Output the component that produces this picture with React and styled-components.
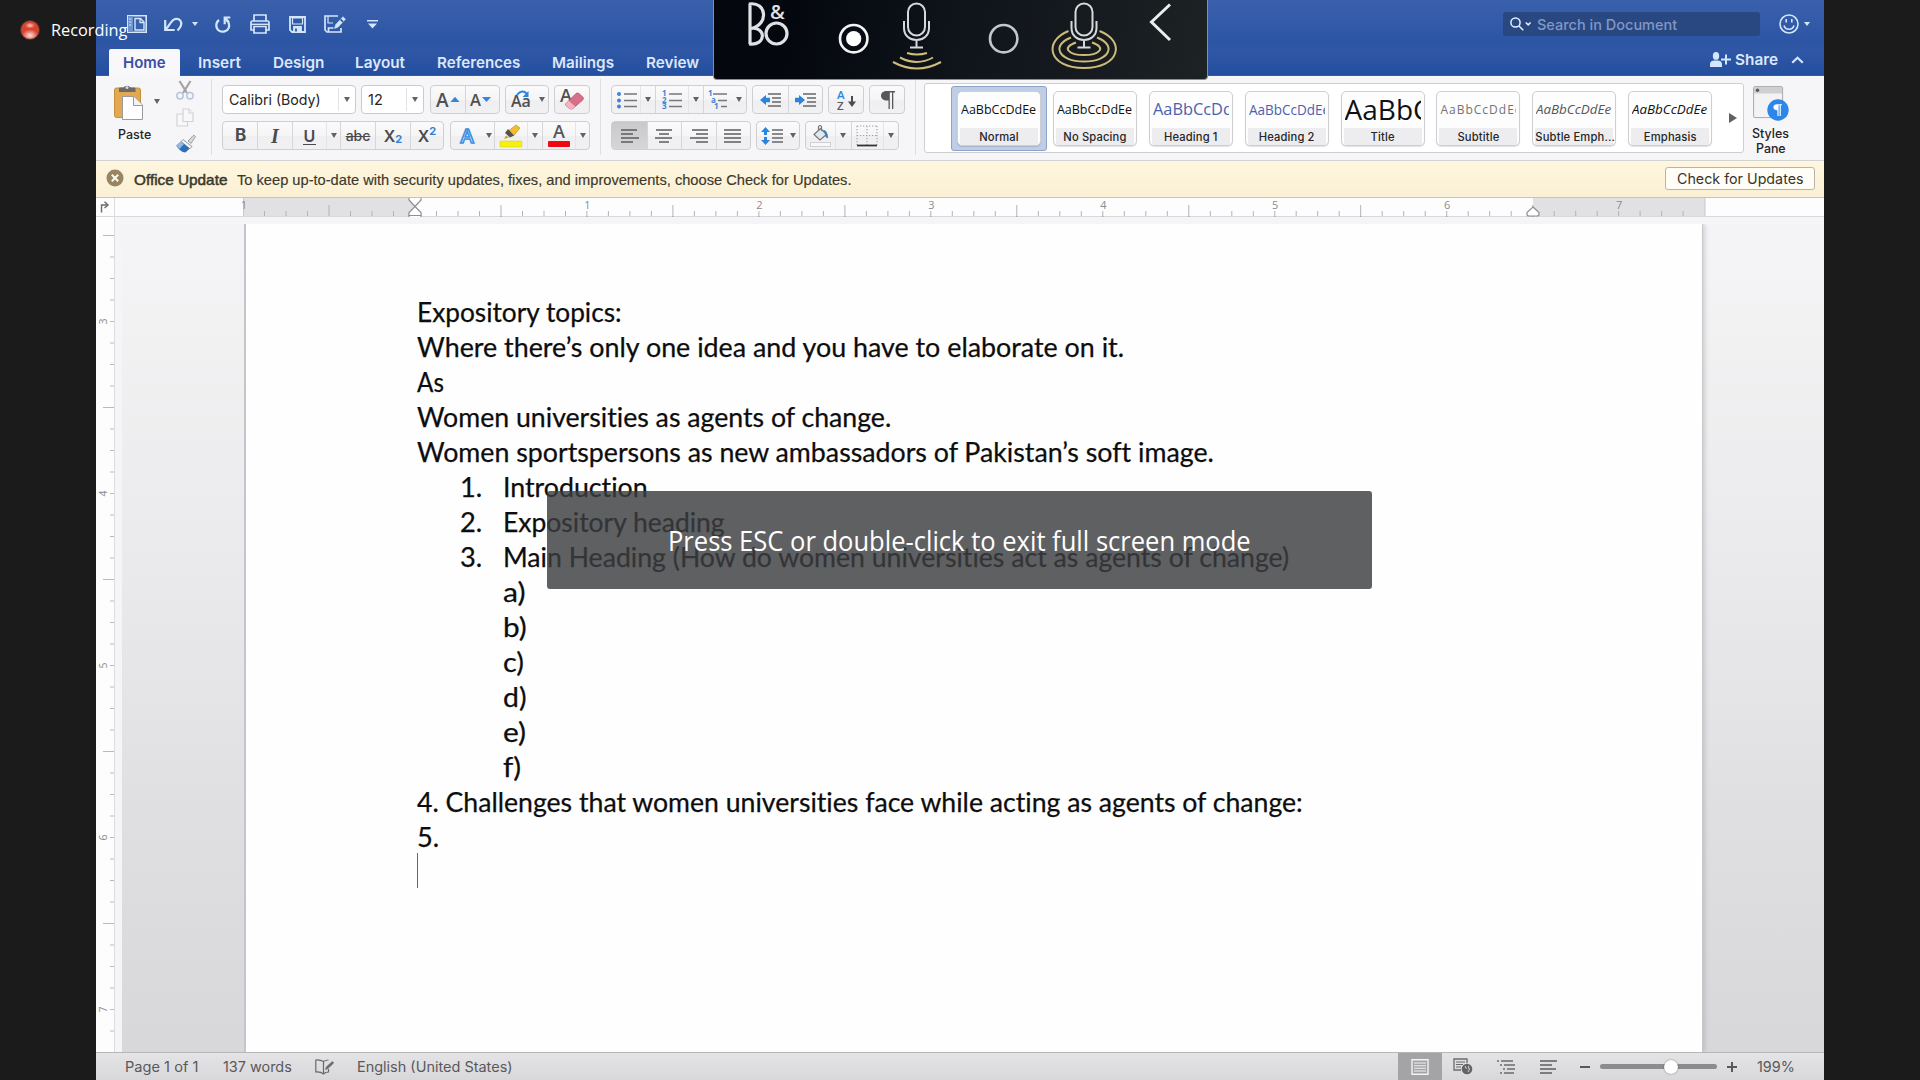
import React, { useLayoutEffect, useRef, useState } from "react";
import styled, { createGlobalStyle, css } from "styled-components";

const UI = `Inter, Roboto, "Liberation Sans", sans-serif`;
const DOC = `Lato, "Open Sans", sans-serif`;
const SEGOE = `"Open Sans", "Noto Sans", sans-serif`;

const GlobalStyle = createGlobalStyle`
  *, *::before, *::after { box-sizing: border-box; }
  body { margin: 0; background: #1b1b1b; font-family: ${UI}; }
  svg { display: block; flex: none; overflow: visible; }
`;

/* ---------- text that fills a given measure ---------- */

const FitBox = styled.span`
  display: inline-block;
  flex: none;
  width: ${(p) => p.$w}px;
  white-space: pre;
`;
const FitInner = styled.span`
  display: inline-block;
  transform-origin: 0 50%;
`;

function Fit({ w, children }) {
  const ref = useRef(null);
  const [scale, setScale] = useState(1);
  useLayoutEffect(() => {
    const natural = ref.current.offsetWidth;
    if (natural) setScale(w / natural);
  }, [w, children]);
  return (
    <FitBox $w={w}>
      <FitInner ref={ref} style={{ transform: `scaleX(${scale})` }}>{children}</FitInner>
    </FitBox>
  );
}

/* ---------- shell ---------- */

const Screen = styled.div`
  position: relative;
  width: 1920px;
  height: 1080px;
  padding: 0 96px;
  overflow: hidden;
  background: #1b1b1b;
`;
const Window = styled.div`
  display: flex;
  flex-direction: column;
  width: 1728px;
  height: 1080px;
  background: #f6f5f8;
`;

const Header = styled.header`
  height: 76px;
  flex: none;
  background: linear-gradient(#3a60ab 0, #345ca8 18px, #2c55a4 40px, #2f57a6 50px, #244f9f 74px);
  border-bottom: 1px solid #3b5c97;
`;
const QuickBar = styled.div`
  display: flex;
  align-items: center;
  height: 48px;
  padding-left: 31px;
`;
const Slot = styled.span`
  display: flex;
  align-items: center;
  justify-content: center;
  flex: none;
  width: ${(p) => p.$w}px;
  margin-left: ${(p) => p.$ml || 0}px;
`;
const Caret = styled.i`
  flex: none;
  width: 0;
  height: 0;
  border: ${(p) => p.$s || 3.5}px solid transparent;
  border-bottom: 0;
  border-top: ${(p) => (p.$s || 3.5) * 1.6}px solid ${(p) => p.$c || "#626262"};
`;
const SearchBox = styled.div`
  display: flex;
  align-items: center;
  width: 257px;
  height: 24px;
  margin-left: auto;
  padding-left: 7px;
  gap: 5px;
  border-radius: 3px;
  background: #294781;
  color: #8197c6;
  font-size: 14.5px;
  font-weight: 500;
`;
const Feedback = styled.div`
  display: flex;
  align-items: center;
  gap: 5px;
  margin: 0 14px 0 19px;
`;

const TabRow = styled.nav`
  display: flex;
  align-items: flex-end;
  height: 28px;
  padding-left: 13px;
`;
const Tab = styled.span`
  display: flex;
  align-items: center;
  flex: none;
  height: 27px;
  margin-right: ${(p) => p.$mr}px;
  padding: ${(p) => (p.$active ? "0 14px 1px" : "0 0 1px")};
  border-radius: 2px 2px 0 0;
  background: ${(p) => (p.$active ? "#f8f8fb" : "transparent")};
  color: ${(p) => (p.$active ? "#3a4ea6" : "#dde7fa")};
  font-size: 15px;
  font-weight: 600;
`;
const ShareArea = styled.span`
  display: flex;
  align-items: center;
  height: 33px;
  margin-left: auto;
  margin-right: 20px;
  color: #dbe8ff;
  font-size: 15px;
  font-weight: 600;
`;

/* ---------- ribbon ---------- */

const Ribbon = styled.div`
  display: flex;
  flex: none;
  height: 85px;
  border-bottom: 1px solid #d3d2d2;
  background: #f6f5f8;
`;
const Clipboard = styled.div`
  display: flex;
  width: 115px;
  padding: 5px 0 0 18px;
`;
const PasteCol = styled.div`
  display: flex;
  flex-direction: column;
  align-items: flex-start;
  width: 52px;
  padding-top: 2px;
  font-size: 12.5px;
  font-weight: 500;
  color: #262626;
`;
const PasteTop = styled.div`
  display: flex;
  align-items: center;
  gap: 11px;
  height: 37px;
`;
const PasteLabel = styled.div`
  padding: 7px 0 0 4px;
`;
const ToolCol = styled.div`
  display: flex;
  flex-direction: column;
  gap: 8px;
  padding-left: 10px;
`;
const Divider = styled.div`
  flex: none;
  width: 1px;
  height: 76px;
  margin: 3px ${(p) => p.$mr || 10}px 0 0;
  background: #dfdee2;
`;
const GroupCol = styled.div`
  display: flex;
  flex-direction: column;
  flex: none;
  gap: 7px;
  width: ${(p) => p.$w}px;
  padding-top: 9px;
`;
const Line = styled.div`
  display: flex;
  gap: 5px;
  height: 29px;
`;
const Cluster = styled.div`
  display: flex;
  flex: none;
  width: ${(p) => p.$w}px;
  margin-left: ${(p) => p.$ml || 0}px;
  border: 1px solid #cfced1;
  border-radius: 4px;
  background: linear-gradient(#fafafb, #f5f5f6 50%, #efeff1 52%, #f1f1f3);
`;
const Cell = styled.div`
  display: flex;
  align-items: center;
  justify-content: center;
  flex: 1 1 ${(p) => p.$w}px;
  min-width: 0;
  border-left: 1px solid ${(p) => (p.$sep ? "#d6d5d8" : p.$faint ? "#e4e4e6" : "transparent")};
  ${(p) => p.$active && css`background: linear-gradient(#c9c9cb, #d6d6d8);`}
  color: #4b4b4d;
  font-size: ${(p) => p.$fs || 17}px;
  font-weight: ${(p) => p.$fw || 600};
  line-height: 1;
`;
const Field = styled.div`
  display: flex;
  align-items: center;
  flex: none;
  width: ${(p) => p.$w}px;
  margin-right: ${(p) => p.$mr || 0}px;
  padding-left: 6px;
  border: 1px solid #cbcacd;
  border-radius: 4px;
  background: #fff;
  color: #242424;
  font-size: 14.5px;
`;
const FieldArrow = styled.span`
  display: flex;
  align-items: center;
  justify-content: center;
  width: 17px;
  height: 23px;
  margin-left: auto;
  border-left: 1px solid #e3e3e5;
`;
const Struck = styled.span`
  text-decoration: line-through;
  font-size: 14px;
  font-weight: 500;
`;
const Serif = styled.em`
  font-family: "Liberation Serif", serif;
  font-size: 20px;
  font-weight: 700;
`;
const Under = styled.span`
  border-bottom: 1.5px solid #4b4b4d;
  padding: 1px 1px 0;
`;
const Script = styled.span`
  color: #2f80d3;
  font-size: 11px;
  font-weight: 700;
  transform: translateY(${(p) => p.$dy}px);
`;

const Gallery = styled.div`
  display: flex;
  flex: none;
  align-items: center;
  width: 820px;
  height: 70px;
  margin-top: 7px;
  padding-left: 26px;
  border: 1px solid #cfced1;
  border-radius: 3px;
  background: #fff;
`;
const StyleWrap = styled.div`
  flex: none;
  width: 95.9px;
  height: 65px;
  padding: 4px 5px;
  border: 1px solid ${(p) => (p.$on ? "#8ea3c8" : "transparent")};
  border-radius: 3px;
  background: ${(p) => (p.$on ? "#bfcde5" : "transparent")};
`;
const StyleCard = styled.div`
  display: flex;
  flex-direction: column;
  width: 84px;
  height: 55px;
  border: 1px solid #cfced2;
  border-radius: 5px;
  background: #fdfdfe;
  box-shadow: 0 1px 1px rgba(0, 0, 0, 0.12);
  overflow: hidden;
`;
const Preview = styled.div`
  display: flex;
  align-items: center;
  flex: 1;
  margin: 0 3px;
  padding-bottom: 1px;
  overflow: hidden;
  white-space: nowrap;
  font-family: ${(p) => p.$ff || `"Open Sans", sans-serif`};
  color: ${(p) => p.$c};
  font-size: ${(p) => p.$fs}px;
  font-weight: ${(p) => p.$fw || 400};
  font-style: ${(p) => (p.$it ? "italic" : "normal")};
  letter-spacing: ${(p) => p.$ls || 0}px;
`;
const StyleLabel = styled.div`
  height: 17px;
  margin: 0 2px;
  background: #ededf0;
  color: #262626;
  font-size: 11.2px;
  font-weight: 500;
  letter-spacing: 0.15px;
  line-height: 18px;
  text-align: center;
  white-space: nowrap;
`;
const GalleryNext = styled.i`
  margin-left: 11px;
  border: 5.5px solid transparent;
  border-right: 0;
  border-left: 8px solid #606062;
`;
const PaneButton = styled.div`
  display: flex;
  flex-direction: column;
  align-items: center;
  width: 53px;
  padding-top: 10px;
  color: #242424;
  font-size: 12.8px;
  font-weight: 500;
  line-height: 14.5px;
  text-align: center;
`;
const PaneText = styled.div`
  margin-top: 6px;
`;

/* ---------- update bar ---------- */

const UpdateBar = styled.div`
  display: flex;
  align-items: center;
  flex: none;
  height: 37px;
  padding: 0 9px 0 10px;
  border-bottom: 1px solid #cbc4ac;
  background: linear-gradient(#fef6de, #faf0d5);
  color: #3d382c;
  font-family: "Liberation Sans", Arial, sans-serif;
  font-size: 14.5px;
`;
const BadgeSlot = styled.span`
  padding-bottom: 2px;
`;
const Strong = styled.span`
  margin: 1px 10px 0 10px;
  -webkit-text-stroke: 0.5px #3d382c;
`;
const Message = styled.span`
  padding-top: 1px;
  -webkit-text-stroke: 0.15px #3d382c;
`;
const UpdateButton = styled.div`
  display: flex;
  align-items: center;
  justify-content: center;
  width: 150px;
  height: 23px;
  margin: 0 0 1px auto;
  border: 1px solid #b9b4a6;
  border-radius: 3px;
  background: #fffdf6;
  color: #38352f;
  font-family: ${UI};
  font-size: 14.5px;
`;

/* ---------- document ---------- */

const RulerRow = styled.div`
  display: flex;
  flex: none;
  height: 19px;
  border-bottom: 1px solid #d9d8db;
  background: #fdfdfe;
`;
const TabStop = styled.div`
  width: 19px;
  border-right: 1px solid #dcdbde;
  padding: 3px 0 0 4px;
`;
const Workspace = styled.div`
  display: flex;
  flex: 1;
  min-height: 0;
  background: linear-gradient(#f5f5f8 0, #f1f1f2 15%, #e9e8eb 45%, #dedee0 75%, #d8d7da 100%);
`;
const SideRuler = styled.div`
  flex: none;
  width: 19px;
  background: #fdfdfe;
  border-right: 1px solid #dcdbde;
`;
const Gutter = styled.div`
  flex: none;
  width: 7px;
  background: #f5f5f8;
`;
const Desk = styled.div`
  flex: 1;
  padding: 7px 0 0 124px;
`;
const Page = styled.article`
  width: 1456px;
  height: 100%;
  padding: 70px 0 0 170.5px;
  background: #fefefe;
  box-shadow: -1px 0 0 1px #c6c4c9, 1px 0 0 #c9c8cb, 3px 0 4px rgba(120, 118, 125, 0.28);
  clip-path: inset(0 -8px 0 -6px);
  color: #0d0d0d;
  font-family: ${DOC};
  font-size: 26px;
  font-variant-ligatures: none;
  -webkit-text-stroke: 0.25px #0d0d0d;
`;
const Para = styled.div`
  display: flex;
  height: 35.03px;
  line-height: 36px;
  padding-left: ${(p) => p.$in || 0}px;
`;
const Num = styled.span`
  flex: none;
  width: 43px;
`;
const Insertion = styled.div`
  width: 1.5px;
  height: 35px;
  margin-top: -1px;
  background: #666;
`;

/* ---------- status bar ---------- */

const StatusBar = styled.footer`
  display: flex;
  align-items: center;
  flex: none;
  height: 28px;
  padding-left: 29px;
  border-top: 1px solid #b7b6b9;
  background: linear-gradient(#e4e3e5, #d8d7d9);
  color: #58585b;
  font-size: 14px;
`;
const ViewButton = styled.div`
  display: flex;
  align-items: center;
  justify-content: center;
  width: ${(p) => p.$w || 44}px;
  height: 100%;
  background: ${(p) => (p.$on ? "#a4a4a6" : "transparent")};
`;
const Track = styled.div`
  display: flex;
  align-items: center;
  width: 117px;
  height: 5px;
  margin: 0 10px;
  padding-left: 64px;
  border-radius: 3px;
  background: #8c8c8e;
`;
const Knob = styled.i`
  width: 14px;
  height: 14px;
  border-radius: 50%;
  background: #fff;
  box-shadow: 0 0 1.5px rgba(0, 0, 0, 0.55);
`;

/* ---------- overlays ---------- */

const RecordingTag = styled.div`
  position: absolute;
  left: 20px;
  top: 18px;
  display: flex;
  align-items: center;
  gap: 11px;
  height: 24px;
  color: #fff;
  font-family: ${SEGOE};
  font-size: 16.5px;
`;
const RecordLabel = styled.span`
  padding-bottom: 2px;
`;
const RecordDot = styled.i`
  width: 20px;
  height: 20px;
  border: 1.5px solid #44312f;
  border-radius: 50%;
  background: radial-gradient(ellipse 5px 3px at 50% 25%, #f8c8c2, transparent),
    radial-gradient(ellipse 8px 6px at 50% 80%, #ffe2de, transparent), #d8432f;
`;
const AudioPanel = styled.div`
  position: absolute;
  left: 713px;
  top: 0;
  width: 495px;
  height: 80px;
  border: 1px solid #8b8e94;
  border-top: 0;
  border-radius: 0 0 4px 4px;
  background: linear-gradient(100deg, #04070e 15%, #11151c 55%, #1d2224);
`;
const Toast = styled.div`
  position: absolute;
  left: 547px;
  top: 491px;
  display: flex;
  align-items: center;
  justify-content: center;
  width: 825px;
  height: 98px;
  padding-top: 2px;
  border-radius: 3px;
  background: rgba(60, 61, 63, 0.82);
  color: #fff;
  font-family: ${SEGOE};
  font-size: 26.5px;
`;

/* ---------- icons ---------- */

const TINT = "#d3e6fb";

const PaneToggle = () => (
  <svg width="20" height="18" viewBox="0 0 20 18" fill="none" stroke={TINT} strokeWidth="1.6">
    <path d="M.8 .8h18.4v16.4H.8z" />
    <path d="M1 1h5v16H1z" fill="#6f93cf" stroke="none" />
    <path d="M2 4h2.4M2 7h2.4M2 10h2.4" strokeWidth="1" />
    <path d="M8 3.5h5.5l3.5 3.6V15H8z" fill="#3a61ac" strokeWidth="1.4" />
    <path d="M13 3.5v4h4" strokeWidth="1.3" />
  </svg>
);
const Undo = () => (
  <svg width="19" height="15" viewBox="0 0 19 15" fill="none" stroke={TINT} strokeWidth="2.2">
    <path d="M1.200 3v10h9.500" />
    <path d="M1.800 12.200C6 8 7.500 2 12 1.800c4-.2 6 3 5 6.500-.5 2-1.800 3.700-3.500 5.200" />
  </svg>
);
const Redo = () => (
  <svg width="16" height="17" viewBox="0 0 16 17" fill="none" stroke={TINT} strokeWidth="2.200">
    <path d="M4 4C.5 6.500.300 12 4 14.600c3.500 2.200 8.500.8 9.800-3 .8-2.800 0-5.600-2.300-7.600" />
    <path d="M15.300 1.500H9.700v6.700M9.900 1.700l4 4.600" />
  </svg>
);
const Printer = () => (
  <svg width="20" height="20" viewBox="0 0 20 20" fill="none" stroke={TINT} strokeWidth="1.700">
    <path d="M4 7V1h12v6" />
    <path d="M4 16H1V8.500Q1 7 2.500 7h15Q19 7 19 8.500V16h-3" />
    <path d="M4 12.500h12V19H4z" />
    <path d="M1 10.300h18" strokeWidth="1.400" />
  </svg>
);
const Save = () => (
  <svg width="17" height="17" viewBox="0 0 17 17" fill="none" stroke={TINT} strokeWidth="1.800">
    <path d="M1 1h15v15H3L1 14z" />
    <path d="M3.500 2h10v6h-10z" fill="#3158a6" strokeWidth="1.200" />
    <path d="M5 16v-5h7v5" fill={TINT} />
    <path d="M7 12.500v3" stroke="#2f57a5" />
  </svg>
);
const SavePen = () => (
  <svg width="22" height="18" viewBox="0 0 22 18" fill="none" stroke={TINT} strokeWidth="1.700">
    <path d="M14 1H1v14l2 2h14v-4" />
    <path d="M4 1v7h5" strokeWidth="1.200" />
    <path d="M4.500 17v-4h5" />
    <path d="M10.500 13.500l1-3.800L19 1.700l2.500 2.500-7.500 8z" fill={TINT} strokeWidth=".5" />
    <path d="M16.500 4.300l2.600 2.500" stroke="#2f57a5" />
  </svg>
);
const Overflow = () => (
  <svg width="11" height="9" viewBox="0 0 11 9" fill={TINT}><path d="M0 0h11v1.600H0zM1 3.600h9L5.500 8.500z" /></svg>
);
const Magnifier = () => (
  <svg width="22" height="14" viewBox="0 0 22 14" fill="none" stroke="#e4efff" strokeWidth="1.500">
    <circle cx="5.500" cy="5.500" r="4.600" /><path d="M9 9l4.300 4.300M15.800 5.500l2.400 2.400 2.400-2.400" />
  </svg>
);
const Smiley = () => (
  <svg width="20" height="20" viewBox="0 0 20 20" fill="none" stroke={TINT} strokeWidth="1.600">
    <circle cx="10" cy="10" r="9" /><path d="M7.200 5v3.600M12.800 5v3.600M5 11.500c1.600 5 8.400 5 10 0" />
  </svg>
);
const AddPerson = () => (
  <svg width="21" height="15" viewBox="0 0 21 15" fill={TINT}>
    <ellipse cx="6" cy="3.900" rx="3.200" ry="3.900" />
    <path d="M0 15v-2.500C0 9.500 2 8.800 4 8.500h4c2 .3 4 1 4 4V15z" />
    <path d="M15 2.500h2v4h4v2h-4v4h-2v-4h-4v-2h4z" />
  </svg>
);
const ChevronUp = () => (
  <svg width="13" height="8" viewBox="0 0 13 8" fill="none" stroke={TINT} strokeWidth="2.200"><path d="M1.200 6.800l5.300-5 5.300 5" /></svg>
);
const PasteIcon = () => (
  <svg width="29" height="36" viewBox="0 0 29 36">
    <rect x=".5" y="4" width="26" height="29.500" rx="2" fill="#e2a950" stroke="#c78f3b" />
    <path d="M5 8V4.500Q5 3.500 6 3.500h3.500a4 3.500 0 0 1 7 0H20q1.500 0 1.500 1V8z" fill="#6a6a6c" />
    <circle cx="13" cy="3.600" r="1.500" fill="#d8d8d8" />
    <path d="M8.500 12.500H20l8.500 8.500v14.500h-20z" fill="#fff" stroke="#9b9b9b" />
    <path d="M19.500 12.500v9h9" fill="#f3f3f3" stroke="#9b9b9b" />
  </svg>
);
const Scissors = () => (
  <svg width="18" height="19" viewBox="0 0 18 19" fill="none">
    <path d="M3.500 0l7.500 12M14.500 0L7 12" stroke="#a3a3a6" strokeWidth="2.200" />
    <circle cx="4" cy="14.800" r="3.200" stroke="#b5c6de" strokeWidth="1.500" />
    <circle cx="14" cy="14.800" r="3.200" stroke="#b5c6de" strokeWidth="1.500" />
  </svg>
);
const Copy = () => (
  <svg width="18" height="19" viewBox="0 0 18 19" fill="#f8f8fa" stroke="#d2d2d5" strokeWidth="1.200">
    <path d="M1 6h7l3.500 3.500V18H1z" /><path d="M7 1h6l4 4v8.500H7z" /><path d="M13 1v4h4" />
  </svg>
);
const Brush = () => (
  <svg width="20" height="18" viewBox="0 0 20 18">
    <path d="M12 6l5-5.300q1.500-.9 2.500.8L15 8.500z" fill="#d8d8da" stroke="#8d8d90" strokeWidth=".8" />
    <path d="M7 4.500l9 7-2.200 2.300L5 6.500z" fill="#f4f4f4" stroke="#808083" strokeWidth=".8" />
    <path d="M5 6.500l8.700 7-4.200 4C6 17.500 2 14 .3 10.500z" fill="#2f6db6" />
    <path d="M5 6.500l3 2.400L3.500 14 .3 10.500z" fill="#8fb8e4" />
  </svg>
);
const Grow = ({ down }) => (
  <svg width="25" height="16" viewBox="0 0 25 16">
    <text x="0" y={down ? 14 : 15} fontFamily="Open Sans" fontWeight="600" fontSize={down ? 16.5 : 19} fill="#4f4f52">A</text>
    {down ? <path d="M12 5h9l-4.500 5z" fill="#2f86dd" /> : <path d="M14.500 10h9L19 4.800z" fill="#2f86dd" />}
  </svg>
);
const CaseIcon = () => (
  <svg width="20" height="17" viewBox="0 0 20 17">
    <text x="0" y="16" fontFamily="Open Sans" fontWeight="600" fontSize="16" fill="#4f4f52">Aa</text>
    <path d="M6 4C9-.5 13-.5 15.500 2.500" fill="none" stroke="#2f86dd" strokeWidth="2" /><path d="M17.500 0v6h-6z" fill="#2f86dd" />
  </svg>
);
const Eraser = () => (
  <svg width="25" height="23" viewBox="0 0 25 23">
    <text x="0" y="14" fontFamily="Open Sans" fontWeight="600" fontSize="18" fill="#4f4f52">A</text>
    <path d="M6 15.500L16 5.500q1.500-1 3 0l4 3.800q1 1.200 0 2.400L13 20.500q-2 1.200-3.500 0L6 17.600q-.8-1 0-2.100z" fill="#d9708a" stroke="#b9506c" strokeWidth=".8" />
    <path d="M6 15.500l2.700-2.700 6.800 6-2.500 1.700q-2 1.200-3.500 0L6 17.600z" fill="#f3b3c2" />
  </svg>
);
const Bullets = () => (
  <svg width="20" height="18" viewBox="0 0 20 18">
    <path d="M7 3h13M7 9.500h13M7 15.500h13" stroke="#77777a" strokeWidth="1.300" />
    <g fill="#3a86d6"><circle cx="2" cy="3" r="2" /><circle cx="2" cy="9.500" r="2" /><circle cx="2" cy="15.500" r="2" /></g>
  </svg>
);
const Numbering = () => (
  <svg width="20" height="18" viewBox="0 0 20 18">
    <path d="M7 3h13M7 9.500h13M7 15.500h13" stroke="#77777a" strokeWidth="1.300" />
    <g fill="#3a86d6" fontFamily="Open Sans" fontSize="8" fontWeight="700"><text x="0" y="5">1</text><text x="0" y="11.500">2</text><text x="0" y="18">3</text></g>
  </svg>
);
const Multilevel = () => (
  <svg width="20" height="18" viewBox="0 0 20 18">
    <path d="M5 3h14M10 9.500h9M13 15.500h6" stroke="#77777a" strokeWidth="1.300" />
    <g fill="#3a86d6" fontFamily="Open Sans" fontSize="8" fontWeight="700"><text x="0" y="5">1</text><text x="3" y="11.500">a</text><text x="6" y="18">1</text></g>
  </svg>
);
const Indent = ({ right }) => (
  <svg width="21" height="14" viewBox="0 0 21 14">
    <path d="M8 1h13M12 5h9M12 9h9M8 13h13" stroke="#67676a" strokeWidth="1.500" />
    {right ? <path d="M0 4.800h4V2l6 5-6 5V9.200H0z" fill="#2d83dc" /> : <path d="M10 4.800H6V2L0 7l6 5V9.200h4z" fill="#2d83dc" />}
  </svg>
);
const Sort = () => (
  <svg width="21" height="20" viewBox="0 0 21 20">
    <text x="1" y="9" fontFamily="Open Sans" fontWeight="600" fontSize="11.500" fill="#2f86dd">A</text>
    <text x="1" y="19.500" fontFamily="Open Sans" fontWeight="600" fontSize="11.500" fill="#5a5a5d">Z</text>
    <path d="M16 6v9" stroke="#4b4b4d" strokeWidth="2" /><path d="M12 11.500h8L16 17z" fill="#4b4b4d" />
  </svg>
);
const Pilcrow = ({ c = "#58585b", s = 1 }) => (
  <svg width={14 * s} height={18 * s} viewBox="0 0 14 18">
    <path d="M6 0h8v1.600h-1.700V18H11V1.600H8.800V18H7.500V9.500C3 10 0 8 0 4.800 0 1.500 2.500 0 6 0z" fill={c} />
  </svg>
);
const OutlineA = () => (
  <svg width="17" height="18" viewBox="0 0 17 18">
    <text x="1.500" y="16" fontFamily="Open Sans" fontWeight="600" fontSize="20" fill="#fff" stroke="#3c8ee0" strokeWidth="1.600">A</text>
  </svg>
);
const Highlighter = () => (
  <svg width="22" height="22" viewBox="0 0 22 22">
    <rect x="0" y="16" width="22" height="6" rx="1" fill="#f7f10a" stroke="#cfc92a" strokeWidth=".5" />
    <path d="M9 5.500l7-5.500 4 3-6.500 8z" fill="#f2bd2e" stroke="#c0902a" strokeWidth=".7" />
    <path d="M5 8l3-4 6 6.500-4 2z" fill="#55524a" /><path d="M6 10.500L4 14l5-1.500z" fill="#d79c2c" />
  </svg>
);
const FontColor = () => (
  <svg width="22" height="22" viewBox="0 0 22 22">
    <rect x="0" y="16" width="22" height="6" rx="1" fill="#ee0a10" />
    <text x="5" y="13" fontFamily="Open Sans" fontWeight="600" fontSize="18" fill="#58585b">A</text>
  </svg>
);
const alignPaths = {
  left: "M0 1h16M0 5h12M0 9h18M0 13h12",
  center: "M1 1h16M4 5h10M0 9h17M4 13h10",
  right: "M2 1h16M6 5h12M0 9h18M6 13h12",
  full: "M0 1h17M0 5h17M0 9h17M0 13h17",
};
const Align = ({ kind }) => (
  <svg width="18" height="14" viewBox="0 0 18 14"><path d={alignPaths[kind]} stroke="#5c5c5f" strokeWidth="1.500" /></svg>
);
const Spacing = () => (
  <svg width="22" height="18" viewBox="0 0 22 18">
    <path d="M11 3h11M11 7h11M11 11h11M11 15h11" stroke="#67676a" strokeWidth="1.500" />
    <path d="M4.500 0L9 5H6v3H3V5H0zM4.500 18L9 13H6v-3H3v3H0z" fill="#2d83dc" />
  </svg>
);
const Bucket = () => (
  <svg width="22" height="22" viewBox="0 0 22 22">
    <rect x=".5" y="17.500" width="20" height="4" fill="#f8f8f8" stroke="#cfcfd2" />
    <path d="M4 9.500l6.500-6 6 6-6.500 5.500z" fill="#dfe9f2" stroke="#757578" strokeWidth="1.200" />
    <path d="M8.500 6V1.500q1.500-2 3 0V6" fill="none" stroke="#757578" strokeWidth="1.200" />
    <path d="M13 4.500q5 1 5 9-3.500-1-3-5z" fill="#3b7dbd" />
  </svg>
);
const Borders = () => (
  <svg width="22" height="22" viewBox="0 0 22 22" fill="none">
    <path d="M1 1h20M1 10.500h20M1 1v19M11 1v19M21 1v19" stroke="#a2a2a5" strokeWidth="1.100" strokeDasharray="1.300 1.700" />
    <path d="M1 20.500h20" stroke="#333" strokeWidth="1.800" />
  </svg>
);
const StylesPaneIcon = () => (
  <svg width="36" height="35" viewBox="0 0 36 35">
    <rect x=".6" y=".6" width="29" height="31" rx="1.500" fill="#f3f3f5" stroke="#a9a9ac" />
    <path d="M1 1h28v6.500H1z" fill="#cfcfd2" /><circle cx="4.500" cy="4.200" r="1.700" fill="#58585b" />
    <circle cx="25" cy="24" r="10.700" fill="#2d86ea" />
    <path d="M24 18.200h5v1h-1.200V30h-1.200V19.200h-1V30h-1.200v-5.700c-2.300.1-4-1-4-3s1.500-3.100 3.600-3.100z" fill="#fff" />
  </svg>
);
const CloseBadge = () => (
  <svg width="18" height="18" viewBox="0 0 18 18">
    <circle cx="9" cy="9" r="8.500" fill="#988563" /><path d="M5.800 5.800l6.400 6.400M12.200 5.800l-6.400 6.400" stroke="#fffaf0" strokeWidth="2" />
  </svg>
);
const TabStopIcon = () => (
  <svg width="10" height="12" viewBox="0 0 10 12" fill="none" stroke="#6b6b6e" strokeWidth="1.400"><path d="M1.500 11.500V4H7" /><path d="M4.500.8L8 4 4.500 7" /></svg>
);
const Proof = () => (
  <svg width="20" height="16" viewBox="0 0 20 16" fill="none" stroke="#69696c" strokeWidth="1.200">
    <path d="M8.500 14V2.500Q5 .5 .8 1v12q5-.3 7.700 2M8.500 2.500Q10.500 1 13.500 1M8.500 15q2-2 5-2V10" />
    <path d="M10.500 10.500l.8-2.500 6-5.500 1.400 1.500-6 5.700z" fill="#69696c" strokeWidth=".6" />
  </svg>
);
const PrintLayout = () => (
  <svg width="18" height="16" viewBox="0 0 18 16" fill="none" stroke="#f4f4f4">
    <path d="M1 .8h16v14.400H1z" strokeWidth="1.400" /><path d="M3 4h12M3 6.700h12M3 9.300h12M3 12h12" strokeWidth="1.100" />
  </svg>
);
const WebLayout = () => (
  <svg width="20" height="17" viewBox="0 0 20 17" fill="none" stroke="#6b6b6e">
    <path d="M8 12H1V1h13v4" strokeWidth="1.300" /><path d="M3 4h9M3 6.500h7M3 9h5" strokeWidth="1.200" />
    <circle cx="14" cy="11" r="5.300" fill="#636366" stroke="none" />
    <path d="M12.500 8q-.5 2 1.500 2.500M16 8q-1.500 1.500.5 3l-1.500 3" stroke="#c4c4c6" strokeWidth="1.100" />
  </svg>
);
const Outline = () => (
  <svg width="19" height="14" viewBox="0 0 19 14" stroke="#6b6b6e" strokeWidth="1.500">
    <path d="M0 1h2M4 1h12M3 5h2M7 5h11M6 9h2M10 9h8M3 13h2M7 13h10" />
  </svg>
);
const Draft = () => (
  <svg width="18" height="14" viewBox="0 0 18 14" stroke="#5e5e61" strokeWidth="1.500"><path d="M0 1h17M0 5h12M0 9h16M0 13h12" /></svg>
);

function HorizontalRuler() {
  const zero = 300;
  const inch = 171.95;
  const end = 1418;
  const ticks = [];
  for (let i = -8; i <= 60; i++) {
    const x = zero + (i * inch) / 8;
    if (i === 0 || i === -8 || x > 1580) continue;
    const half = i % 4 === 0 && i % 8 !== 0;
    ticks.push(<path key={i} d={`M${x.toFixed(1)} ${half && x < end ? 7 : 13}V18`} stroke="#b3b2b5" />);
    if (i % 4 === 0 && i > 0 && x < end) ticks.push(<path key={`b${i}`} d={`M${x.toFixed(1)} 18v4`} stroke="#97969a" />);
  }
  return (
    <svg width="1709" height="18" viewBox="0 0 1709 18">
      <rect x="128" width="172" height="18" fill="#e1e0e3" />
      <rect x={end} width="172" height="18" fill="#e1e0e3" />
      <path d="M128.500 0v18M1590 0v18" stroke="#c9c8cb" />
      {ticks}
      <g fill="#8c8c8f" fontFamily="Open Sans" fontSize="11" textAnchor="middle">
        {[1, 2, 3, 4, 5, 6, 7].map((n) => <text key={n} x={zero + n * inch + 0.5} y="11">{n}</text>)}
        <text x="129" y="11">1</text>
      </g>
      <g fill="#fff" stroke="#8f8f92" strokeWidth="1.200">
        <path d="M294 0h12v2l-6 6.500-6-6.500z" stroke="none" />
        <path d="M294 0v2l6 6.500 6-6.500V0" /><path d="M300 8.500l6 6v3h-12v-3z" /><path d="M294 17.500h12v7h-12z" />
        <path d="M1418 9l6 5.500v1.500q0 2-2 2h-8q-2 0-2-2v-1.500z" />
      </g>
    </svg>
  );
}

function VerticalRuler() {
  const ticks = [];
  for (let i = -4; i <= 34; i++) {
    const y = 104.5 + (i * 172) / 8;
    if (y < 10) continue;
    const half = (i + 40) % 8 === 4;
    ticks.push(<path key={i} d={`M${half ? 7 : 14} ${y.toFixed(1)}H18`} stroke="#bab9bc" />);
  }
  return (
    <svg width="18" height="835" viewBox="0 0 18 835">
      {ticks}
      <g fill="#8c8c8f" fontFamily="Open Sans" fontSize="10.500" textAnchor="middle">
        {[3, 4, 5, 6, 7].map((n, k) => <text key={n} transform={`translate(11 ${104.5 + k * 172}) rotate(-90)`}>{n}</text>)}
      </g>
    </svg>
  );
}

const Mic = ({ x }) => (
  <g transform={`translate(${x} 0)`} fill="none" stroke="#d6d8db" strokeWidth="2">
    <rect x="-8.500" y="3.500" width="17" height="32" rx="8.500" />
    <path d="M-12.500 21v7c0 16 25 16 25 0v-7M0 40v7M-6.500 47.500h13" />
  </g>
);
function AudioGraphics() {
  return (
    <svg width="493" height="79" viewBox="714 0 493 79" fill="none">
      <g stroke="#dfe1e4" strokeWidth="3.200">
        <path d="M750 3.500V44M749 4C767 1 769 25 751 28.500M751 28.500C766 26 767 46 749 44" />
        <circle cx="776.500" cy="33.500" r="10.500" />
      </g>
      <text x="770" y="18.500" fontFamily="Open Sans" fontWeight="600" fontSize="20" fill="#dfe1e4">&amp;</text>
      <circle cx="853.700" cy="38.700" r="13.700" stroke="#f4f4f4" strokeWidth="2.600" />
      <circle cx="853.700" cy="38.700" r="7.600" fill="#fff" />
      <circle cx="1003.700" cy="38.700" r="13.700" stroke="#c4c6c8" strokeWidth="2.600" />
      <g stroke="#cdbb79" strokeWidth="2">
        <path d="M907 53q10 3 20 0M900 57.500q17 9 33 0M893 62q24 13 48 0" />
        <path d="M1068.500 31C1043 41 1048 68 1084 68s42-27 15.500-37" />
        <path d="M1071 37.500C1051 45 1058 61.500 1084 61.500s33-16.500 13-24" />
        <path d="M1076 42.500C1060 48 1070 55 1084 55s24-7 8-12.500" />
      </g>
      <Mic x={916.5} />
      <Mic x={1084} />
      <path d="M1170 4.500L1151.500 22l18.500 18" stroke="#eceded" strokeWidth="3" />
    </svg>
  );
}

/* ---------- data ---------- */

const tabs = [
  ["Insert", 43, 32], ["Design", 51, 31], ["Layout", 50, 32], ["References", 83, 32], ["Mailings", 62, 32], ["Review", 53, 0],
];
const styleCards = [
  { name: "Normal", w: 75, c: "#111", fs: 12.5, fw: 500, on: true },
  { name: "No Spacing", w: 75, c: "#111", fs: 12.5, fw: 500 },
  { name: "Heading 1", w: 98, c: "#4a62ad", fs: 16 },
  { name: "Heading 2", w: 81, c: "#4a62ad", fs: 14 },
  { name: "Title", w: 168, c: "#111", fs: 28 },
  { name: "Subtitle", w: 82, c: "#737376", fs: 12, ls: 1 },
  { name: "Subtle Emph...", w: 75, c: "#555558", fs: 12.5, it: true },
  { name: "Emphasis", w: 75, c: "#111", fs: 12.5, fw: 500, it: true },
];
const paragraphs = [
  { text: "Expository topics:", w: 205 },
  { text: "Where there’s only one idea and you have to elaborate on it.", w: 707 },
  { text: "As", w: 27 },
  { text: "Women universities as agents of change.", w: 474 },
  { text: "Women sportspersons as new ambassadors of Pakistan’s soft image.", w: 797 },
  { num: "1.", text: "Introduction", w: 145 },
  { num: "2.", text: "Expository heading", w: 222 },
  { num: "3.", text: "Main Heading (How do women universities act as agents of change)", w: 786 },
  { indent: 86, text: "a)", w: 22 },
  { indent: 86, text: "b)", w: 24 },
  { indent: 86, text: "c)", w: 21 },
  { indent: 86, text: "d)", w: 24 },
  { indent: 86, text: "e)", w: 23 },
  { indent: 86, text: "f)", w: 18 },
  { text: "4. Challenges that women universities face while acting as agents of change:", w: 886 },
  { text: "5.", w: 22 },
];

/* ---------- app ---------- */

export default function App() {
  return (
    <Screen>
      <GlobalStyle />
      <Window>
        <Header>
          <QuickBar>
            <Slot $w={20}><PaneToggle /></Slot>
            <Slot $w={19} $ml={17}><Undo /></Slot>
            <Slot $w={7} $ml={8}><Caret $s={3} $c={TINT} /></Slot>
            <Slot $w={16} $ml={17}><Redo /></Slot>
            <Slot $w={20} $ml={19}><Printer /></Slot>
            <Slot $w={17} $ml={19}><Save /></Slot>
            <Slot $w={22} $ml={18}><SavePen /></Slot>
            <Slot $w={11} $ml={21}><Overflow /></Slot>
            <SearchBox>
              <Magnifier />
              <Fit w={140}>Search in Document</Fit>
            </SearchBox>
            <Feedback><Smiley /><Caret $s={3} $c={TINT} /></Feedback>
          </QuickBar>
          <TabRow>
            <Tab $active $mr={18}><Fit w={43}>Home</Fit></Tab>
            {tabs.map(([label, w, mr]) => <Tab key={label} $mr={mr}><Fit w={w}>{label}</Fit></Tab>)}
            <ShareArea>
              <AddPerson />
              <Slot $w={43} $ml={4}><Fit w={43}>Share</Fit></Slot>
              <Slot $w={13} $ml={13}><ChevronUp /></Slot>
            </ShareArea>
          </TabRow>
        </Header>

        <Ribbon>
          <Clipboard>
            <PasteCol>
              <PasteTop><PasteIcon /><Caret /></PasteTop>
              <PasteLabel><Fit w={33}>Paste</Fit></PasteLabel>
            </PasteCol>
            <ToolCol><Scissors /><Copy /><Brush /></ToolCol>
          </Clipboard>
          <Divider />
          <GroupCol $w={378}>
            <Line>
              <Field $w={134}><Fit w={92}>Calibri (Body)</Fit><FieldArrow><Caret /></FieldArrow></Field>
              <Field $w={63} $mr={1}><Fit w={15}>12</Fit><FieldArrow><Caret /></FieldArrow></Field>
              <Cluster $w={70}><Cell $w={35}><Grow /></Cell><Cell $w={35} $sep><Grow down /></Cell></Cluster>
              <Cluster $w={44}><Cell $w={28}><CaseIcon /></Cell><Cell $w={14}><Caret /></Cell></Cluster>
              <Cluster $w={36}><Cell $w={34}><Eraser /></Cell></Cluster>
            </Line>
            <Line>
              <Cluster $w={222}>
                <Cell $w={34} $fs={17} $fw={700}>B</Cell>
                <Cell $w={35} $sep><Serif>I</Serif></Cell>
                <Cell $w={34} $sep $fs={16}><Under>U</Under></Cell>
                <Cell $w={14} $faint><Caret /></Cell>
                <Cell $w={35} $sep><Struck>abc</Struck></Cell>
                <Cell $w={35} $sep $fs={16}>X<Script $dy={4}>2</Script></Cell>
                <Cell $w={33} $sep $fs={16}>X<Script $dy={-4}>2</Script></Cell>
              </Cluster>
              <Cluster $w={140} $ml={1}>
                <Cell $w={31}><OutlineA /></Cell><Cell $w={12}><Caret /></Cell>
                <Cell $w={33} $sep><Highlighter /></Cell><Cell $w={15} $faint><Caret /></Cell>
                <Cell $w={33} $sep><FontColor /></Cell><Cell $w={14} $faint><Caret /></Cell>
              </Cluster>
            </Line>
          </GroupCol>
          <Divider />
          <GroupCol $w={304}>
            <Line>
              <Cluster $w={136}>
                <Cell $w={28}><Bullets /></Cell><Cell $w={15} $faint><Caret /></Cell>
                <Cell $w={33} $sep><Numbering /></Cell><Cell $w={15} $faint><Caret /></Cell>
                <Cell $w={28} $sep><Multilevel /></Cell><Cell $w={15}><Caret /></Cell>
              </Cluster>
              <Cluster $w={71}><Cell $w={35}><Indent /></Cell><Cell $w={35} $sep><Indent right /></Cell></Cluster>
              <Cluster $w={36}><Cell $w={34}><Sort /></Cell></Cluster>
              <Cluster $w={36}><Cell $w={34}><Pilcrow /></Cell></Cluster>
            </Line>
            <Line>
              <Cluster $w={140}>
                <Cell $w={35} $active><Align kind="left" /></Cell>
                <Cell $w={35} $sep><Align kind="center" /></Cell>
                <Cell $w={35} $sep><Align kind="right" /></Cell>
                <Cell $w={35} $sep><Align kind="full" /></Cell>
              </Cluster>
              <Cluster $w={44}><Cell $w={28}><Spacing /></Cell><Cell $w={14}><Caret /></Cell></Cluster>
              <Cluster $w={94}>
                <Cell $w={29}><Bucket /></Cell><Cell $w={15} $faint><Caret /></Cell>
                <Cell $w={32} $sep><Borders /></Cell><Cell $w={15} $faint><Caret /></Cell>
              </Cluster>
            </Line>
          </GroupCol>
          <Divider $mr={8} />
          <Gallery>
            {styleCards.map((s) => (
              <StyleWrap key={s.name} $on={s.on}>
                <StyleCard>
                  <Preview $c={s.c} $fs={s.fs} $fw={s.fw} $it={s.it} $ls={s.ls}><Fit w={s.w}>AaBbCcDdEe</Fit></Preview>
                  <StyleLabel>{s.name}</StyleLabel>
                </StyleCard>
              </StyleWrap>
            ))}
            <GalleryNext />
          </Gallery>
          <PaneButton>
            <StylesPaneIcon />
            <PaneText><Fit w={37}>Styles</Fit><Fit w={30}>Pane</Fit></PaneText>
          </PaneButton>
        </Ribbon>

        <UpdateBar>
          <BadgeSlot><CloseBadge /></BadgeSlot>
          <Strong><Fit w={93}>Office Update</Fit></Strong>
          <Message><Fit w={615}>To keep up-to-date with security updates, fixes, and improvements, choose Check for Updates.</Fit></Message>
          <UpdateButton><Fit w={127}>Check for Updates</Fit></UpdateButton>
        </UpdateBar>

        <RulerRow>
          <TabStop><TabStopIcon /></TabStop>
          <HorizontalRuler />
        </RulerRow>

        <Workspace>
          <SideRuler><VerticalRuler /></SideRuler>
          <Gutter />
          <Desk>
            <Page>
              {paragraphs.map((p) => (
                <Para key={p.text} $in={p.num ? 43 : p.indent}>
                  {p.num && <Num><Fit w={22}>{p.num}</Fit></Num>}
                  <Fit w={p.w}>{p.text}</Fit>
                </Para>
              ))}
              <Insertion />
            </Page>
          </Desk>
        </Workspace>

        <StatusBar>
          <Fit w={73}>Page 1 of 1</Fit>
          <Slot $w={69} $ml={25}><Fit w={69}>137 words</Fit></Slot>
          <Slot $w={20} $ml={23}><Proof /></Slot>
          <Slot $w={156} $ml={22}><Fit w={156}>English (United States)</Fit></Slot>
          <Slot $w={885} />
          <ViewButton $on><PrintLayout /></ViewButton>
          <ViewButton $w={42}><WebLayout /></ViewButton>
          <ViewButton><Outline /></ViewButton>
          <ViewButton $w={42}><Draft /></ViewButton>
          <Slot $w={10} $ml={10}><svg width="10" height="2"><path d="M0 1h10" stroke="#58585b" strokeWidth="2" /></svg></Slot>
          <Track><Knob /></Track>
          <Slot $w={10}><svg width="10" height="10"><path d="M0 5h10M5 0v10" stroke="#58585b" strokeWidth="2" /></svg></Slot>
          <Slot $w={38} $ml={20}><Fit w={38}>199%</Fit></Slot>
        </StatusBar>
      </Window>

      <RecordingTag><RecordDot /><RecordLabel><Fit w={76}>Recording</Fit></RecordLabel></RecordingTag>
      <AudioPanel><AudioGraphics /></AudioPanel>
      <Toast><Fit w={583}>Press ESC or double-click to exit full screen mode</Fit></Toast>
    </Screen>
  );
}
